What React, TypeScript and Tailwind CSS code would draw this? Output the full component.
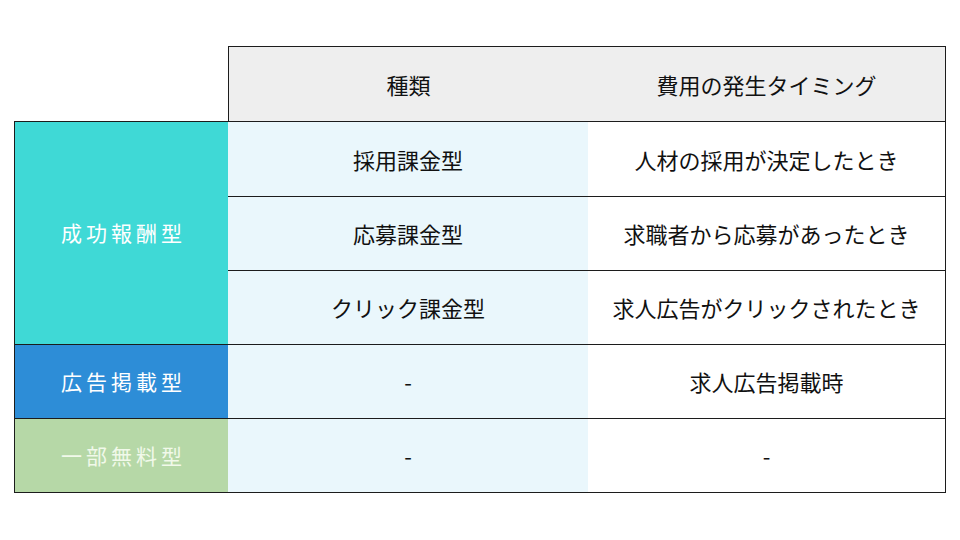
const rows = [
  { kind: "採用課金型", timing: "人材の採用が決定したとき" },
  { kind: "応募課金型", timing: "求職者から応募があったとき" },
  { kind: "クリック課金型", timing: "求人広告がクリックされたとき" },
];

const line = "border-[#1c1c1c]";
const cell = "flex items-center justify-center text-[22px]";
const label = "flex items-center justify-center text-[21px] tracking-[4px] pl-[4px]";

export default function App() {
  return (
    <div
      className="w-[960px] h-[540px] bg-white text-[#111]"
      style={{ fontFamily: '"Noto Sans CJK JP", "Noto Sans", sans-serif' }}
    >
      <div className="pt-[46px] pl-[14px]">
        <div className="grid grid-cols-[214px_360px_358px] grid-rows-[75px_75px_74px_74px_74px_75px]">
          {/* header */}
          <div />
          <div className={`${cell} bg-[#eeeeee] border-t border-l ${line}`}>種類</div>
          <div className={`${cell} bg-[#eeeeee] border-t border-r ${line} text-[21.5px]`}>
            費用の発生タイミング
          </div>

          {/* 成功報酬型 */}
          <div className={`${label} row-span-3 bg-[#3fd9d6] border-t border-l ${line} text-white`}>
            成功報酬型
          </div>
          {rows.map((r) => (
            <div key={r.kind} className="contents">
              <div className={`${cell} bg-[#eaf7fc] border-t ${line}`}>{r.kind}</div>
              <div className={`${cell} bg-white border-t border-r ${line}`}>{r.timing}</div>
            </div>
          ))}

          {/* 広告掲載型 */}
          <div className={`${label} bg-[#2d8dd7] border-t border-l ${line} text-white`}>
            広告掲載型
          </div>
          <div className={`${cell} bg-[#eaf7fc] border-t ${line}`}>-</div>
          <div className={`${cell} bg-white border-t border-r ${line}`}>求人広告掲載時</div>

          {/* 一部無料型 */}
          <div className={`${label} bg-[#b6d8a7] border-t border-l border-b ${line} text-[#f1f9ea]`}>
            一部無料型
          </div>
          <div className={`${cell} bg-[#eaf7fc] border-t border-b ${line}`}>-</div>
          <div className={`${cell} bg-white border-t border-r border-b ${line}`}>-</div>
        </div>
      </div>
    </div>
  );
}
